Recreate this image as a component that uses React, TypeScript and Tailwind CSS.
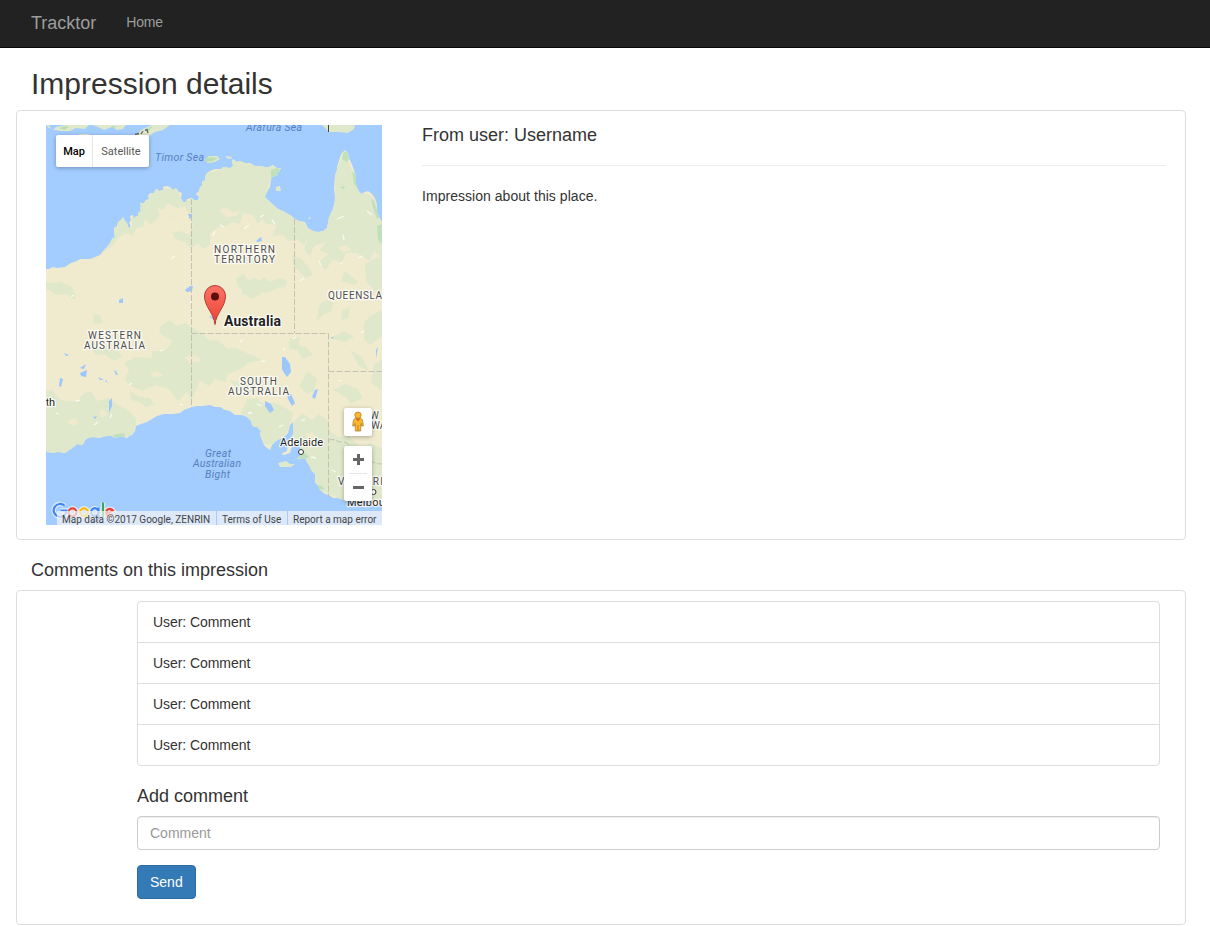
import React from "react";

const comments = ["User: Comment", "User: Comment", "User: Comment", "User: Comment"];

const MAINLAND =
  "M46 269L49 269L53 267L57 268L65 267L71 263L77 261L80 259L90 259L95 257L100 255L104 250L107 247L110 243L112 239L115 237L114 233L114 228L117 226L118 222L121 220L123 217L125 221L127 223L128 227L130 228L130 224L129 223L131 220L130 216L133 215L134 219L136 216L138 216L138 213L141 211L140 208L141 206L140 203L144 203L146 200L149 199L148 196L150 193L154 193L155 190L157 189L159 191L163 190L163 187L166 186L170 187L173 190L176 188L179 192L182 193L181 198L183 202L186 202L187 199L192 198L194 200L198 200L199 197L196 194L199 191L200 187L202 186L202 182L205 180L205 176L207 173L210 171L215 169L221 169L223 167L230 168L233 166L232 161L233 159L237 162L240 161L245 163L250 163L255 166L260 166L265 167L269 167L273 165L277 168L281 168L279 172L276 173L278 175L272 177L271 180L270 187L267 192L265 197L270 202L278 209L285 212L290 215L295 219L299 221L305 222L308 228L313 231L318 232L323 231L327 228L329 217L332 211L334 205L335 198L334 188L335 175L337 170L337 167L340 157L342 153L345 150L348 153L349 158L353 167L356 177L356 184L358 190L361 194L365 192L368 191L372 194L375 198L377 205L377 212L379 217L382 222V504L376 505L370 502L363 501L357 502L351 500L343 500L338 498L333 498L329 495L325 494L320 490L318 486L315 482L315 474L311 470L310 467L307 462L305 458L297 459L300 456L302 451L299 445L295 444L292 445L291 450L290 453L284 455L281 454L287 451L288 443L290 440L293 434L293 422L290 425L288 433L285 436L282 438L276 441L272 445L270 450L267 448L264 445L262 440L260 435L261 431L257 427L254 427L252 425L251 421L247 417L242 415L235 415L230 411L225 410L220 407L215 407L210 405L202 406L197 406L192 407L184 410L180 413L173 414L164 414L157 416L147 422L141 424L136 426L135 431L132 435L129 436L127 438L121 436L115 438L112 436L107 436L99 438L93 437L88 438L85 440L84 443L82 445L77 444L75 446L71 449L65 453L58 452L53 453L46 452Z";

const GREENS = [
  "M100 255L111 240L117 222L123 216L132 228L132 216L140 211L140 203L149 200L150 193L157 189L176 188L183 202L193 199L199 197L198 190L206 174L210 172V245L203 249L198 243L191 249L185 242L176 239L172 233L180 231L189 235L193 226L191 216L185 207L176 208L168 203L163 210L158 208L160 215L155 221L151 224L145 220L143 227L136 228L133 236L126 233L119 237L113 245Z",
  "M207 173L221 169L233 160L250 163L281 168L270 181L265 197L285 212L305 222L309 231L322 237L318 242L307 239L304 245L297 239L288 241L283 235L272 236L277 225L266 224L262 219L258 224L253 215L243 213L240 224L232 222L228 226L217 227L211 233L205 231L202 222L194 220Z",
  "M299 222L308 229L324 231L335 203V173L345 150L358 190L375 198L382 222V258L374 251L370 261L357 253L346 253L342 263L333 259L325 271L319 262L329 254L320 250L326 242L314 246L310 256L304 250L307 241Z",
  "M46 282L53 283L61 282L68 285L72 287L76 298L72 299L66 294L57 295L51 291L46 289Z",
  "M94 314L100 315L103 322L98 324L93 323Z M85 340L91 343L99 342L108 349L118 351L122 357L114 361L104 354L96 355Z",
  "M161 326L170 320L176 326L185 323L195 329L202 333L208 340L219 341L229 350L244 354L248 360L234 362L239 370L227 374L226 382L215 379L209 386L200 380L196 390L191 400L187 392L178 401L169 389L156 385L142 391L129 385L125 379L129 370L124 363L135 357L151 358L153 351L165 351L173 341L165 337L159 332Z",
  "M236 278L244 274L248 280L255 278L260 281L264 277L270 282L280 278L287 281L285 287L278 288L272 291L261 293L256 297L250 299L247 295L241 294L243 290L238 287Z",
  "M292 255L302 259L308 267L313 275L306 278L299 271L294 267Z M345 271L352 277L359 282L354 285L341 281Z M321 303L327 300L334 303L330 312L323 315L317 321L318 311Z",
  "M342 311L350 307L348 318L341 321Z",
  "M46 391L53 390L58 398L64 401L76 402L83 394L91 391L97 401L109 398L118 405L129 411L136 418L136 426L132 435L127 438L115 438L107 436L88 438L82 445L75 446L65 453L46 452Z",
  "M130 391L140 397L150 398L154 404L146 407L139 402L131 400Z",
  "M221 350L236 348L249 354L262 360L248 363L240 370L230 368Z M229 380L239 382L249 380L258 387L249 393L239 391Z M247 399L257 398L264 405L274 402L284 407L293 413L288 431L272 445L265 445L260 435L247 417L241 413Z",
  "M289 339L300 337L299 345L307 348L313 355L302 359L297 350L289 349Z M308 371L317 379L314 391L307 394L299 386Z",
  "M293 423L302 413L312 420L319 414L327 420L331 432L338 437L349 436L361 448L371 443L382 449V504L343 500L320 490L310 467L297 459L302 451L293 443Z",
  "M364 322L372 315L382 310V336L370 345L364 339Z M330 338L344 331L354 337L344 342Z M374 365L382 359V390L371 383Z M333 390L345 384L358 389L363 398L351 404L346 397Z",
  "M365 264L382 255V289L375 292L366 281Z M350 350L362 357L369 371L359 366Z",
];

const DARKER = [
  "M343 153L347 151L349 159L347 162L342 159Z M352 171L356 175L357 188L354 184Z M340 187L345 186L344 189Z M371 199L374 201L376 208L379 217L377 219L373 207Z M377 226L382 224V244L378 240Z",
  "M271 170L278 168L281 170L277 176L271 178Z M275 187L280 186L281 191L276 192Z",
  "M113 435L124 433L125 437L115 438Z M296 457L305 453L309 457L301 460Z M306 484L320 485L325 489L318 490Z",
  "M345 493L365 493L375 503L358 502Z",
];

const LAKES = [
  "M185 290L190 286L193 286L192 291L187 292Z",
  "M119 300L123 298L123 303L119 303Z",
  "M282 357L285 357L290 364L291 372L287 377L284 373L282 369Z",
  "M265 401L271 404L274 410L270 413L265 406Z",
  "M287 393L291 394L295 403L292 406L288 399Z",
  "M315 390L318 389L315 399L312 397Z",
  "M80 373L87 370L86 377L81 376Z M80 368L86 364L84 369Z",
  "M60 378L63 379L61 387L59 386Z M64 353L69 355L66 356Z",
  "M114 370L116 371L118 375L116 375Z M98 377L104 380L100 380Z M106 380L108 383L105 381Z",
  "M109 401L112 398L112 406L109 413Z M93 417L97 416L95 419Z",
  "M256 241L261 237L262 241L258 242Z M188 214L192 214L190 220Z",
  "M376 350L378 347L376 358Z M331 337L334 337L332 339Z M209 316L213 317L214 320L211 318Z",
];

const SPECKS =
  "M71 297l3 -2M171 259l4 -3M138 336l3 -2M190 303l2 -3M160 351l3 -1M180 404l3 1M129 385l3 -2M220 225l4 2M244 229l5 -4M260 217l4 -2M272 220l3 4M286 211l2 -2M300 281l4 -3M319 261l2 4M340 264l3 -2M337 219l7 -3M367 211l5 4M372 192l2 3M261 362l4 -2M267 391l4 1M293 339l3 -2M283 348l2 2M338 380l3 1M343 296l5 1M361 333l3 -2M301 421l4 -2M279 427l4 -2M257 404l5 2M248 413l4 0M332 470l4 2M311 457l5 1M76 401l4 -1M94 425l4 -3M56 413l3 1M110 418l2 -4M215 231l-2 5M240 342l3 -3M343 235l1 5M358 258l5 -2";

type LabelProps = {
  x: number;
  y: number;
  size?: number;
  width?: number;
  className?: string;
  children: string;
};

function MapLabel({ x, y, size = 10, width, className = "fill-[#4d4d4d]", children }: LabelProps) {
  return (
    <text
      x={x}
      y={y}
      fontSize={size}
      textLength={width}
      className={className}
      stroke="#fff"
      strokeOpacity=".75"
      strokeWidth="2.6"
      strokeLinejoin="round"
      paintOrder="stroke"
    >
      {children}
    </text>
  );
}

function SeaLabel({ x, y, width, children }: LabelProps) {
  return (
    <text x={x} y={y} fontSize="10.5" textLength={width} className="fill-[#5581be] italic">
      {children}
    </text>
  );
}

function MapCanvas() {
  return (
    <svg
      width="336"
      height="400"
      viewBox="46 125 336 400"
      className="block font-[Roboto,sans-serif]"
      role="img"
      aria-label="Australia"
    >
      <defs>
        <clipPath id="land">
          <path d={MAINLAND} />
        </clipPath>
        <linearGradient id="pin" x1="0" y1="0" x2="0" y2="1">
          <stop offset="0" stopColor="#fc7367" />
          <stop offset="1" stopColor="#ea4335" />
        </linearGradient>
      </defs>
      <rect x="46" y="125" width="336" height="400" fill="#a3ccff" />

      <g fill="#dfe8cb">
        <path d="M46 126L51 129L49 125Z M53 130L56 127L66 125H89L85 129L76 128L70 131L61 131L55 130Z" />
        <path d="M79 134L89 134L90 136H80Z M92 125H126L123 129L117 130L112 127L104 130L98 127Z" />
        <path d="M136 136L141 130L147 127L152 125H170L163 130L155 132L149 136Z" />
        <path d="M322 125H355L354 129L348 133L339 132L329 132Z" />
        <path d="M205 160L209 156L217 156L220 159L215 162L208 163Z M226 156L232 157L231 159L226 158Z" />
        <path d="M278 463L286 461L290 464L295 464L291 467L280 467Z" />
      </g>
      <g fill="#b9dfb3">
        <path d="M59 128l7 -2l3 1l-5 3z M111 126l6 0l-3 2z M145 129l8 -3l-4 5z M205 159l6 -2l7 1l-5 3l-7 1z" />
      </g>
      <path d="M135 134.500l4 -1M141 134l2 -3M145 130h3M147 130l1 3" stroke="#666" fill="none" strokeWidth="1.3" />
      <path d="M328.500 125V132" stroke="#444" />

      <path d={MAINLAND} fill="#f0ebcf" />
      <g clipPath="url(#land)">
        <g fill="#dfe8cb">
          {GREENS.map((d) => (
            <path key={d} d={d} />
          ))}
        </g>
        <g fill="#bfe0b8">
          {DARKER.map((d) => (
            <path key={d} d={d} />
          ))}
        </g>
        <path
          d="M219 210l7 -3l6 5l9 -1l-5 5l-10 1z M232 229l9 -3l6 4l-8 3z M337 247l9 -2l6 5l-9 2z M140 233l6 -4l3 5l-6 2z M165 217l8 -3l6 4l-7 3z M67 421l8 -3l5 5l-7 3z M99 411l5 -2l3 6l-6 3z M184 357l12 -2l6 6l-12 2z M150 373l8 -2l6 5l-10 1z M343 450l11 -4l11 7l-13 3z M305 434l7 -2l5 7l-7 3z"
          fill="#efeacd"
        />
        <path d={SPECKS} stroke="#faf9ee" strokeWidth="1.3" fill="none" />
      </g>
      <g fill="#9cc7fb">
        {LAKES.map((d) => (
          <path key={d} d={d} />
        ))}
      </g>
      <path d="M276 187l4 -1l1 5h-5z M308 218l2 -1l1 1l-2 1z" fill="#dfe8cb" />

      <g fill="none" stroke="#c6c0b2" strokeDasharray="6 2">
        <path d="M191.500 199V407" />
        <path d="M294.500 219V333" />
        <path d="M191.500 333.500H328.500" />
        <path d="M328.500 333.500V497" />
        <path d="M328.500 371.500H382" />
        <path d="M328.500 440C335 438 338 443 343 442S351 450 358 452S368 464 382 464" />
      </g>

      <SeaLabel x={155} y={161} width={49}>Timor Sea</SeaLabel>
      <SeaLabel x={246} y={131} width={56}>Arafura Sea</SeaLabel>
      <SeaLabel x={205} y={457} width={26}>Great</SeaLabel>
      <SeaLabel x={193} y={467} width={48}>Australian</SeaLabel>
      <SeaLabel x={205} y={478} width={25}>Bight</SeaLabel>

      <MapLabel x={214} y={253} width={61}>NORTHERN</MapLabel>
      <MapLabel x={214} y={263} width={61}>TERRITORY</MapLabel>
      <MapLabel x={328} y={299} width={69}>QUEENSLAND</MapLabel>
      <MapLabel x={88} y={339} width={53}>WESTERN</MapLabel>
      <MapLabel x={84} y={349} width={61}>AUSTRALIA</MapLabel>
      <MapLabel x={240} y={385} width={37}>SOUTH</MapLabel>
      <MapLabel x={228} y={395} width={61}>AUSTRALIA</MapLabel>
      <MapLabel x={370} y={419}>W</MapLabel>
      <MapLabel x={371} y={429}>WA</MapLabel>
      <MapLabel x={338} y={485} width={53}>VICTORIA</MapLabel>
      <MapLabel x={30} y={406} size={11} width={25} className="fill-[#222]">Perth</MapLabel>
      <MapLabel x={280} y={446} size={11} width={43} className="fill-[#222]">Adelaide</MapLabel>
      <MapLabel x={347} y={506} size={11} width={54} className="fill-[#222]">Melbourne</MapLabel>
      <MapLabel x={224} y={326} size={14} width={57} className="fill-[#222] font-bold">Australia</MapLabel>
      <circle cx="301" cy="452" r="2.500" fill="#fff" stroke="#333" />
      <circle cx="373.500" cy="492" r="2.500" fill="#fff" stroke="#333" />

      <path
        d="M215 324.500C214 313 204.500 307 204.500 296A10.500 10.500 0 0 1 225.500 296C225.500 307 216 313 215 324.500Z"
        fill="url(#pin)"
        stroke="#b63a32"
      />
      <circle cx="215" cy="296.500" r="4" fill="#5b1010" />
    </svg>
  );
}

function GoogleLogo() {
  return (
    <svg width="68" height="24" viewBox="0 0 68 24" className="absolute bottom-0 left-[4px]" aria-label="Google">
      {[true, false].map((halo) => (
        <g
          key={String(halo)}
          fill="none"
          strokeWidth={halo ? 4.6 : 2.2}
          stroke={halo ? "#fff" : undefined}
          strokeOpacity={halo ? 0.65 : 1}
        >
          <path d="M14.600 4.800A6.400 6.400 0 1 0 16.500 9.500H10.500" stroke={halo ? "#fff" : "#4285f4"} />
          <circle cx="22.500" cy="11.200" r="3.900" stroke={halo ? "#fff" : "#ea4335"} />
          <circle cx="34" cy="11.200" r="3.900" stroke={halo ? "#fff" : "#fbbc05"} />
          <path d="M48.500 6.500V16A4 4 0 0 1 41 18M48.500 11.200A3.700 3.900 0 1 1 48.500 11.100" stroke={halo ? "#fff" : "#4285f4"} />
          <path d="M53 1.500V16" stroke={halo ? "#fff" : "#34a853"} />
          <path d="M56.500 12.500L63 9.500A3.700 3.700 0 1 0 63 13.500" stroke={halo ? "#fff" : "#ea4335"} />
        </g>
      ))}
    </svg>
  );
}

function Pegman() {
  return (
    <svg width="14" height="22" viewBox="0 0 14 22" className="-mt-px">
      <path
        d="M4.200 7.500H9.800Q11.500 8 11.700 10L12.300 15H10.700L10 12.500L9.600 20H4.400L4 12.500L3.300 15H1.700L2.300 10Q2.500 8 4.200 7.500Z"
        fill="#fbb829"
        stroke="#aa8337"
        strokeWidth=".8"
      />
      <path d="M7 14V20" stroke="#c57c16" />
      <path d="M4.500 7.500H9.500L7 10.500Z" fill="#e0641d" />
      <circle cx="7" cy="4.200" r="3.200" fill="#fbb829" stroke="#aa8337" strokeWidth=".8" />
    </svg>
  );
}

function MapView() {
  return (
    <div className="relative h-[400px] w-[336px] shrink-0 overflow-hidden font-[Roboto,sans-serif]">
      <MapCanvas />
      <div className="absolute top-[10px] left-[10px] flex h-8 w-[93px] items-center overflow-hidden rounded-[2px] bg-white text-[11px] shadow-[0_1px_4px_rgba(0,0,0,0.3)]">
        <span className="flex h-full w-[37px] items-center justify-center border-r border-[#e6e6e6] pt-px font-medium text-black">
          Map
        </span>
        <span className="flex-1 pt-px text-center text-[#565656]">Satellite</span>
      </div>
      <div className="absolute top-[283px] right-[10px] flex size-7 items-center justify-center rounded-[2px] bg-white shadow-[0_1px_4px_rgba(0,0,0,0.3)]">
        <Pegman />
      </div>
      <div className="absolute top-[321px] right-[10px] h-[55px] w-7 rounded-[2px] bg-white shadow-[0_1px_4px_rgba(0,0,0,0.3)]">
        <svg width="28" height="55" viewBox="0 0 28 55">
          <path d="M9 13.500H20M14.500 8V19M9 41.500H20" stroke="#666" strokeWidth="3" />
          <path d="M5 27.500H23" stroke="#e6e6e6" />
        </svg>
      </div>
      <GoogleLogo />
      <div className="absolute right-0 bottom-0 flex h-[14px] text-[10px] leading-[17px] whitespace-nowrap text-[#444]">
        <span className="w-[159px] bg-[#f5f5f5]/70 pl-[5px]">Map data ©2017 Google, ZENRIN</span>
        <span className="w-[71px] border-l border-[#a3ccff] bg-[#f5f5f5]/70 pl-[5px]">Terms of Use</span>
        <span className="w-[95px] border-l border-[#a3ccff] bg-[#f5f5f5]/70 pl-[5px]">Report a map error</span>
      </div>
    </div>
  );
}

export default function App() {
  return (
    <div className="h-[926px] overflow-hidden bg-white font-['Liberation_Sans',Arial,sans-serif] text-sm leading-5 text-[#333]">
      <nav className="flex h-12 border-b border-[#080808] bg-[#222] pl-[31px] text-[#9d9d9d]">
        <a className="pt-[13px] text-lg leading-5">Tracktor</a>
        <a className="ml-[30px] pt-3 tracking-[-0.2px]">Home</a>
      </nav>
      <main className="w-[1186px] pl-4">
        <h1 className="pt-[19px] pl-[15px] text-[30px] leading-[33px]">Impression details</h1>
        <section className="mt-[10px] flex h-[430px] rounded-[4px] border border-[#ddd] pt-[14px] pl-[29px]">
          <MapView />
          <div className="ml-10 w-[744px]">
            <h2 className="h-[41px] border-b border-[#eee] text-lg leading-5">From user: Username</h2>
            <p className="mt-5 tracking-[0.04px]">Impression about this place.</p>
          </div>
        </section>
        <h2 className="mt-5 pl-[15px] text-lg leading-5">Comments on this impression</h2>
        <section className="mt-[10px] h-[335px] rounded-[4px] border border-[#ddd] pt-[10px] pr-[25px] pl-[120px]">
          <ul className="divide-y divide-[#ddd] rounded-[4px] border border-[#ddd]">
            {comments.map((comment, i) => (
              <li key={i} className="px-[15px] py-[10px] leading-5 tracking-[-0.06px]">
                {comment}
              </li>
            ))}
          </ul>
          <h2 className="mt-5 text-lg leading-5">Add comment</h2>
          <input
            placeholder="Comment"
            className="mt-[10px] block h-[34px] w-full rounded-[4px] border border-[#ccc] px-3 py-1.5 shadow-[inset_0_1px_1px_rgba(0,0,0,0.075)] placeholder:text-[#999]"
          />
          <button className="mt-[15px] block h-[34px] rounded-[4px] border border-[#2e6da4] bg-[#337ab7] px-3 text-white">
            Send
          </button>
        </section>
      </main>
    </div>
  );
}
